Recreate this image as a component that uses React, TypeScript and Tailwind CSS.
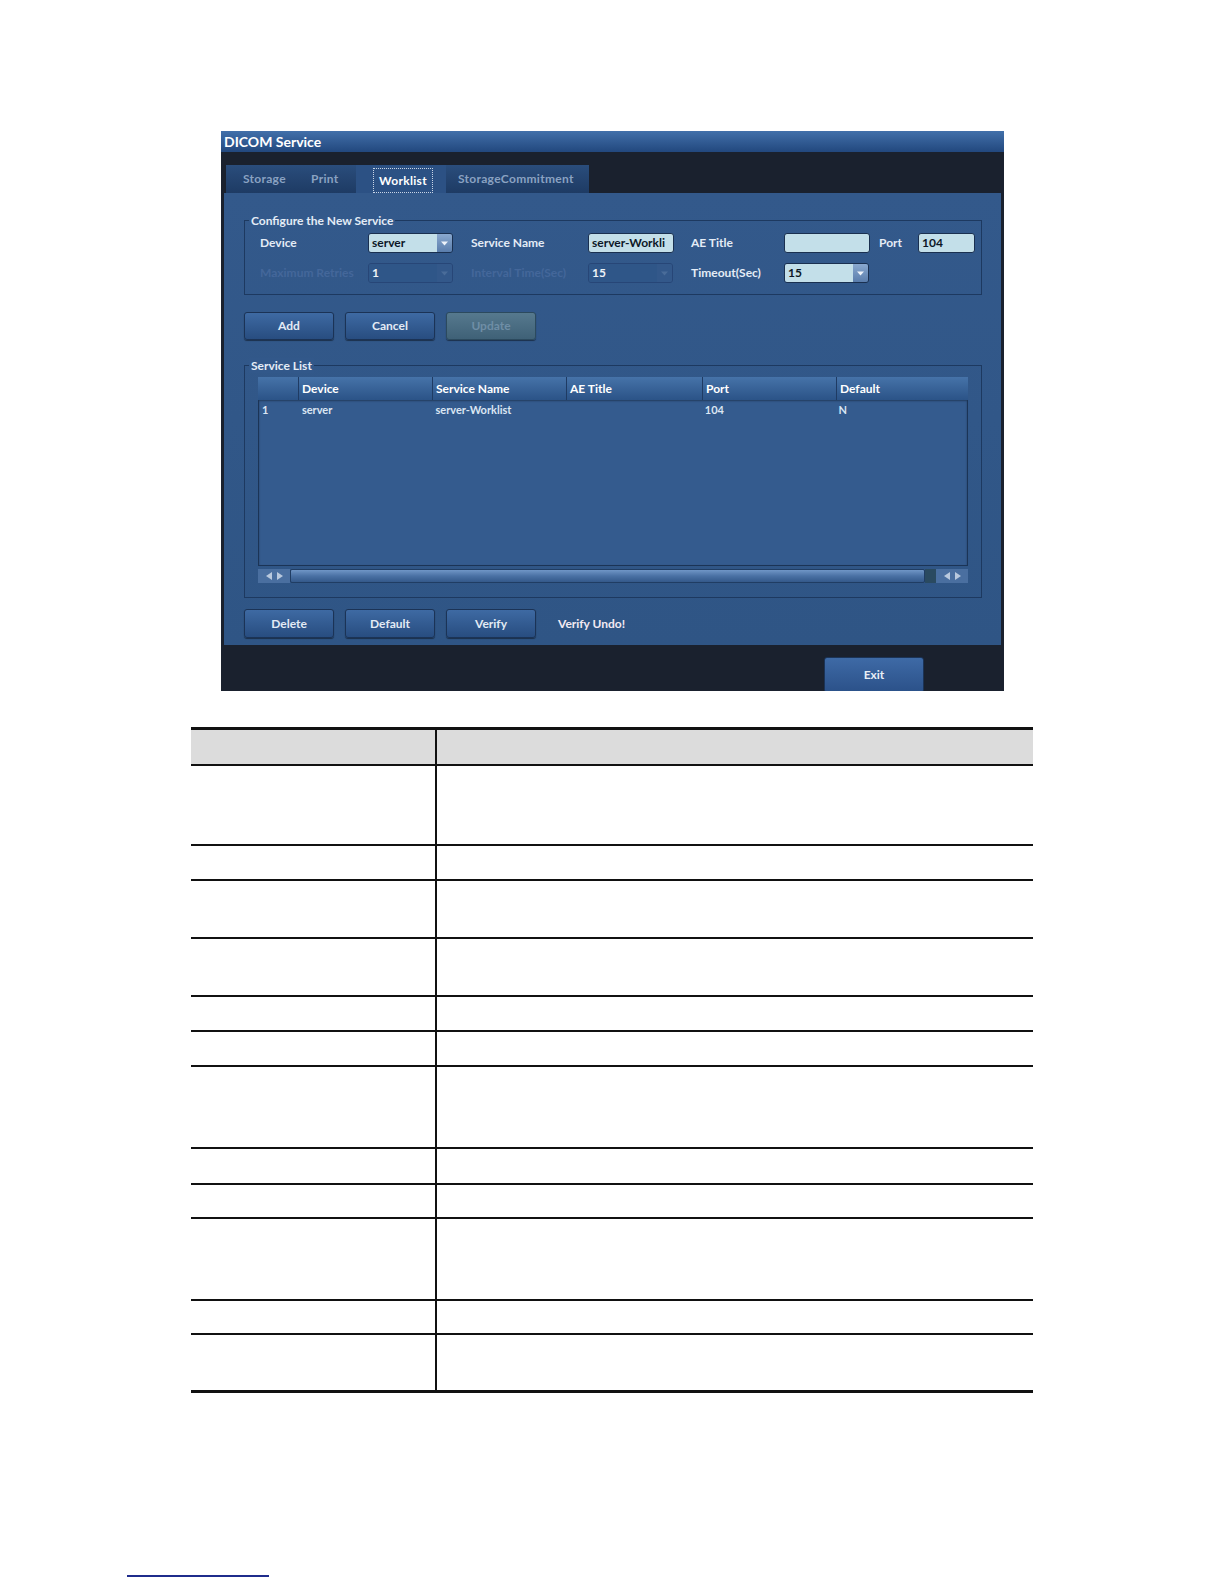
import React from "react";

// Bold UI font used across the dialog
const ui = "font-[Lato,'Open_Sans',sans-serif] font-bold";

function Arrow({ dim }: { dim?: boolean }) {
  return (
    <svg width="7" height="5" viewBox="0 0 7 5">
      <path d="M0 0.5h7L3.5 4.5z" fill={dim ? "#4a6c99" : "#eef3fa"} />
    </svg>
  );
}

function Dropdown({ value, dim }: { value: string; dim?: boolean }) {
  return (
    <div
      className={`flex h-[20px] w-[85px] rounded-[3px] border ${
        dim ? "border-[#274677]" : "border-[#1a3050]"
      }`}
    >
      <div
        className={`flex flex-1 items-center rounded-l-[2px] pl-[3px] text-[12px] ${
          dim ? "bg-[#2f5688] text-[#eef3f8]" : "bg-[#c3dfe9] text-[#0c1726]"
        }`}
      >
        {value}
      </div>
      <div
        className={`flex w-[15px] items-center justify-center rounded-r-[2px] ${
          dim ? "bg-[#33588a]" : "bg-linear-to-b from-[#8aa9cf] to-[#5a7dac]"
        }`}
      >
        <Arrow dim={dim} />
      </div>
    </div>
  );
}

function Field({ value, w }: { value: string; w: string }) {
  return (
    <div
      className={`flex h-[20px] ${w} items-center rounded-[3px] border border-[#1a3050] bg-[#c3dfe9] pl-[3px] text-[12px] text-[#0c1726]`}
    >
      {value}
    </div>
  );
}

function Btn({ label, disabled }: { label: string; disabled?: boolean }) {
  return (
    <div
      className={`flex h-full w-[90px] items-center justify-center rounded-[3px] border text-[12px] shadow-[0_1px_1px_rgba(0,0,0,0.45)] ${
        disabled
          ? "border-[#2c4a5e] bg-linear-to-b from-[#56798e] to-[#3f6177] text-[#6f8ea6]"
          : "border-[#1b3356] bg-linear-to-b from-[#3e6aa3] to-[#284d80] text-[#e3ebf5]"
      }`}
    >
      {label}
    </div>
  );
}

function ScrollArrows() {
  return (
    <div className="flex w-[32px] items-center justify-center gap-[5px] bg-[#4a6fa0]">
      <svg width="6" height="8" viewBox="0 0 6 8">
        <path d="M6 0v8L0 4z" fill="#b9c9de" />
      </svg>
      <svg width="6" height="8" viewBox="0 0 6 8">
        <path d="M0 0v8l6-4z" fill="#b9c9de" />
      </svg>
    </div>
  );
}

const colW = ["w-[40px]", "w-[134px]", "w-[134px]", "w-[136px]", "w-[134px]", "w-[132px]"];
const heads = ["", "Device", "Service Name", "AE Title", "Port", "Default"];
const row = ["1", "server", "server-Worklist", "", "104", "N"];

function DicomDialog() {
  return (
    <div className={`flex h-[560px] w-[783px] flex-col overflow-hidden bg-[#1a212e] ${ui}`}>
      {/* title bar */}
      <div className="flex h-[21px] shrink-0 items-center bg-linear-to-b from-[#4270aa] to-[#22487e] pl-[3px] text-[14px] text-white">
        DICOM Service
      </div>

      {/* tabs */}
      <div className="flex h-[41px] shrink-0 items-end bg-[#1a212e] pl-[5px]">
        <div className="flex h-[28px] bg-linear-to-b from-[#2a4d7c] to-[#1e3b64] text-[12px] tracking-[0.3px] text-[#8aa2c2]">
          <div className="flex w-[70px] items-center pl-[17px]">Storage</div>
          <div className="flex w-[60px] items-center pl-[15px]">Print</div>
          <div className="flex w-[90px] items-end bg-[#2c5184] pl-[17px]">
            <div className="flex h-[25px] w-[60px] items-center justify-center border border-dotted border-[#c9d5e6] text-white">
              Worklist
            </div>
          </div>
          <div className="flex w-[143px] items-center pl-[12px]">StorageCommitment</div>
        </div>
      </div>

      {/* main panel */}
      <div className="mx-[3px] flex h-[452px] shrink-0 flex-col bg-linear-to-b from-[#33598b] to-[#2f5585] pl-[20px] text-[#e4ecf6]">
        {/* configure box */}
        <div className="relative mt-[27px] flex h-[75px] w-[738px] flex-col gap-[10px] border border-[#1d3960] pl-[15px] pt-[12px] text-[12px]">
          <div className="absolute -top-[8px] left-[4px] bg-[#33598b] px-[2px] leading-[15px]">
            Configure the New Service
          </div>
          <div className="flex items-center">
            <div className="w-[108px]">Device</div>
            <Dropdown value="server" />
            <div className="ml-[18px] w-[117px]">Service Name</div>
            <Field value="server-Workli" w="w-[86px]" />
            <div className="ml-[17px] w-[93px]">AE Title</div>
            <Field value="" w="w-[86px]" />
            <div className="ml-[9px] w-[39px]">Port</div>
            <Field value="104" w="w-[57px]" />
          </div>
          <div className="flex items-center">
            <div className="w-[108px] text-[#44679a]">Maximum Retries</div>
            <Dropdown value="1" dim />
            <div className="ml-[18px] w-[117px] text-[#44679a]">Interval Time(Sec)</div>
            <Dropdown value="15" dim />
            <div className="ml-[18px] w-[93px]">Timeout(Sec)</div>
            <Dropdown value="15" />
          </div>
        </div>

        {/* add / cancel / update */}
        <div className="mt-[17px] flex h-[28px] gap-[11px]">
          <Btn label="Add" />
          <Btn label="Cancel" />
          <Btn label="Update" disabled />
        </div>

        {/* service list box */}
        <div className="relative mt-[25px] flex h-[233px] w-[738px] flex-col border border-[#1d3960] pl-[13px] pt-[11px]">
          <div className="absolute -top-[8px] left-[4px] bg-[#32588a] px-[2px] text-[12px] leading-[15px]">
            Service List
          </div>
          <div className="flex h-[23px] w-[710px] bg-linear-to-b from-[#4673a9] to-[#2b5387] text-[12px] text-white">
            {heads.map((h, i) => (
              <div
                key={i}
                className={`flex items-center pl-[3px] ${colW[i]} ${i > 0 ? "border-l border-[#1f3b63]" : ""}`}
              >
                {h}
              </div>
            ))}
          </div>
          <div className="h-[166px] w-[710px] border border-t-0 border-[#1b3456] bg-[#345b8e] shadow-[inset_0_1px_2px_rgba(0,0,0,0.35)]">
            <div className="flex h-[20px] text-[11px] text-[#dbe6f3]">
              {row.map((c, i) => (
                <div key={i} className={`flex items-center pl-[3px] ${colW[i]}`}>
                  {c}
                </div>
              ))}
            </div>
          </div>
          <div className="mt-[3px] flex h-[14px] w-[710px]">
            <ScrollArrows />
            <div className="flex-1 rounded-[2px] border border-[#203d63] bg-linear-to-b from-[#7096c6] via-[#4a71a4] to-[#34598a]" />
            <div className="w-[11px] bg-[#2a4a60]" />
            <ScrollArrows />
          </div>
        </div>

        {/* delete / default / verify */}
        <div className="mt-[11px] flex h-[29px] items-center gap-[11px]">
          <Btn label="Delete" />
          <Btn label="Default" />
          <Btn label="Verify" />
          <div className="ml-[11px] text-[12px] text-[#f3eaf3]">Verify Undo!</div>
        </div>
      </div>

      {/* bottom bar */}
      <div className="flex-1 pl-[603px] pt-[12px]">
        <div className="flex h-[36px] w-[100px] items-start justify-center rounded-[3px] border border-[#1b3356] bg-linear-to-b from-[#3e6aa6] to-[#2b5189] pt-[8px] text-[12px] text-[#e8eef6]">
          Exit
        </div>
      </div>
    </div>
  );
}

// heights of the empty rows in the document table (px, incl. bottom rule)
const docRows = [80, 35, 58, 58, 35, 35, 82, 36, 34, 82, 34];

function DocTable() {
  return (
    <div className="ml-[191px] mt-[36px] flex w-[842px] flex-col border-t-[3px] border-b-[3px] border-[#111]">
      <div className="flex h-[36px] border-b-2 border-[#111] bg-[#dcdcdc]">
        <div className="w-[246px] border-r-2 border-[#111]" />
        <div className="flex-1" />
      </div>
      {docRows.map((h, i) => (
        <div key={i} className="flex border-b-2 border-[#111]" style={{ height: h }}>
          <div className="w-[246px] border-r-2 border-[#111]" />
          <div className="flex-1" />
        </div>
      ))}
      <div className="flex h-[55px]">
        <div className="w-[246px] border-r-2 border-[#111]" />
        <div className="flex-1" />
      </div>
    </div>
  );
}

export default function App() {
  return (
    <div className="flex h-[1584px] w-[1224px] flex-col bg-white">
      <div className="ml-[221px] mt-[131px]">
        <DicomDialog />
      </div>
      <DocTable />
      <div className="ml-[127px] mt-[182px] h-[2px] w-[142px] bg-[#1f2c8c]" />
    </div>
  );
}
